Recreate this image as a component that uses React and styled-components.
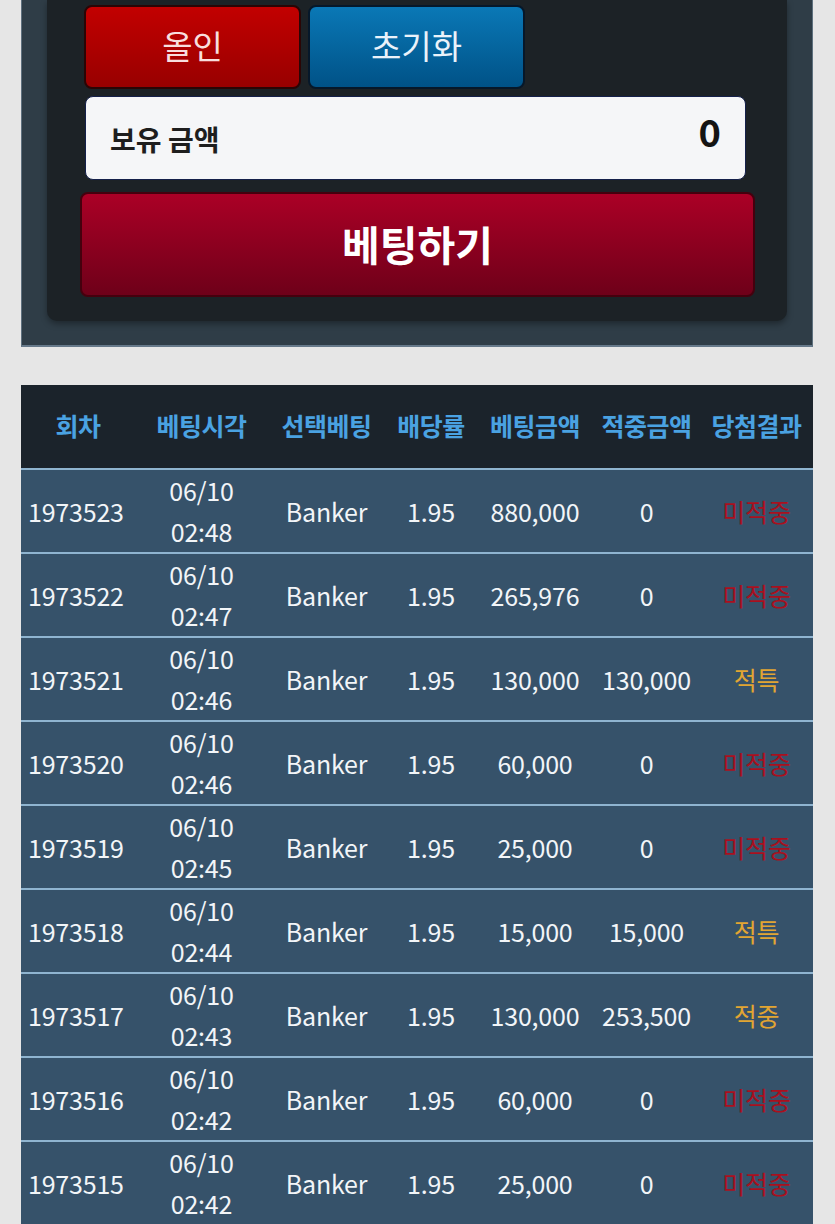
import React from "react";
import styled, { createGlobalStyle } from "styled-components";

const Global = createGlobalStyle`
  html, body { margin: 0; padding: 0; background: #e6e6e6; }
  body { font-family: "Noto Sans CJK KR", "Noto Sans", sans-serif; }
  * { box-sizing: border-box; }
`;

const Page = styled.div`
  width: 835px;
  padding: 0 22px 0 21px;
  display: flex;
  flex-direction: column;
  gap: 38px;
`;

const OuterPanel = styled.div`
  background: #2f3d47;
  border-left: 1px solid #5e707e;
  border-right: 1px solid #5e707e;
  border-bottom: 2px solid #66798a;
  padding: 0 25px 24px 25px;
`;

const InnerPanel = styled.div`
  background: #1c2226;
  border-radius: 0 0 10px 10px;
  box-shadow: 0 3px 6px rgba(0, 0, 0, 0.35);
  padding: 5px 36px 24px 34px;
  display: flex;
  flex-direction: column;
`;

const ButtonRow = styled.div`
  display: flex;
  gap: 7px;
  padding-left: 3px;
`;

const SmallButton = styled.button`
  width: 217px;
  height: 84px;
  border-radius: 8px;
  border: 2px solid ${(p) => (p.$tone === "red" ? "#2a0505" : "#06182a")};
  background: ${(p) =>
    p.$tone === "red"
      ? "linear-gradient(#c20000, #980000)"
      : "linear-gradient(#0a78b6, #005287)"};
  color: ${(p) => (p.$tone === "red" ? "#f8dede" : "#eaf2fa")};
  font-family: "Noto Sans CJK KR", sans-serif;
  font-size: 33px;
  font-weight: 400;
  display: flex;
  align-items: center;
  justify-content: center;
  padding: 0 0 4px 0;
`;

const BalanceBox = styled.div`
  margin: 7px 5px 0 4px;
  height: 84px;
  background: #f5f6f8;
  border: 1px solid #14204a;
  border-radius: 8px;
  display: flex;
  align-items: center;
  justify-content: space-between;
  padding: 0 24px 0 24px;
`;

const BalanceLabel = styled.span`
  font-size: 28px;
  font-weight: 700;
  color: #1e1e1e;
  margin-top: 2px;
`;

const BalanceValue = styled.span`
  font-size: 38px;
  font-weight: 700;
  color: #141414;
  margin-top: -16px;
`;

const BetButton = styled.button`
  margin-top: 12px;
  height: 105px;
  border-radius: 8px;
  border: 2px solid #45000e;
  background: linear-gradient(#ab0026, #6e0019);
  color: #ffffff;
  font-family: "Noto Sans CJK KR", sans-serif;
  font-size: 41px;
  font-weight: 700;
  display: flex;
  align-items: center;
  justify-content: center;
  padding: 0 0 4px 0;
  margin-left: -1px;
  width: calc(100% + 5px);
`;

const Table = styled.table`
  width: 792px;
  border-collapse: collapse;
  table-layout: fixed;
  font-family: "Noto Sans CJK KR", sans-serif;
`;

const HeadCell = styled.th`
  background: #1b232b;
  height: 84px;
  color: #4aa2e2;
  font-size: 25px;
  font-weight: 700;
  text-align: center;
  padding: 0 0 4px 0;
  white-space: nowrap;
  letter-spacing: -0.5px;
  border-bottom: 2px solid #8fb4d0;
`;

const Row = styled.tr`
  background: #36526a;
  border-bottom: 2px solid #8fb4d0;
`;

const Cell = styled.td`
  height: 84px;
  color: #f2f5f8;
  font-size: 25px;
  font-weight: 400;
  text-align: center;
  line-height: 41px;
  padding: 0;
  white-space: nowrap;
  letter-spacing: -0.2px;
`;

const RoundCell = styled(Cell)`
  text-align: left;
  padding-left: 7px;
`;

const ResultCell = styled(Cell)`
  color: ${(p) => (p.$hit ? "#e2a532" : "#a8101e")};
`;

const cols = [114, 133, 117, 92, 116, 107, 113];
const heads = ["회차", "베팅시각", "선택베팅", "배당률", "베팅금액", "적중금액", "당첨결과"];

const rows = [
  ["1973523", "02:48", "880,000", "0", "미적중"],
  ["1973522", "02:47", "265,976", "0", "미적중"],
  ["1973521", "02:46", "130,000", "130,000", "적특"],
  ["1973520", "02:46", "60,000", "0", "미적중"],
  ["1973519", "02:45", "25,000", "0", "미적중"],
  ["1973518", "02:44", "15,000", "15,000", "적특"],
  ["1973517", "02:43", "130,000", "253,500", "적중"],
  ["1973516", "02:42", "60,000", "0", "미적중"],
  ["1973515", "02:42", "25,000", "0", "미적중"],
];

export default function App() {
  return (
    <>
      <Global />
      <Page>
        <OuterPanel>
          <InnerPanel>
            <ButtonRow>
              <SmallButton $tone="red">올인</SmallButton>
              <SmallButton $tone="blue">초기화</SmallButton>
            </ButtonRow>
            <BalanceBox>
              <BalanceLabel>보유 금액</BalanceLabel>
              <BalanceValue>0</BalanceValue>
            </BalanceBox>
            <BetButton>베팅하기</BetButton>
          </InnerPanel>
        </OuterPanel>
        <Table>
          <colgroup>
            {cols.map((w, i) => (
              <col key={i} style={{ width: w }} />
            ))}
          </colgroup>
          <thead>
            <tr>
              {heads.map((h) => (
                <HeadCell key={h}>{h}</HeadCell>
              ))}
            </tr>
          </thead>
          <tbody>
            {rows.map(([round, time, amount, win, result]) => (
              <Row key={round}>
                <RoundCell>{round}</RoundCell>
                <Cell>
                  06/10
                  <br />
                  {time}
                </Cell>
                <Cell>Banker</Cell>
                <Cell>1.95</Cell>
                <Cell>{amount}</Cell>
                <Cell>{win}</Cell>
                <ResultCell $hit={result !== "미적중"}>{result}</ResultCell>
              </Row>
            ))}
          </tbody>
        </Table>
      </Page>
    </>
  );
}
